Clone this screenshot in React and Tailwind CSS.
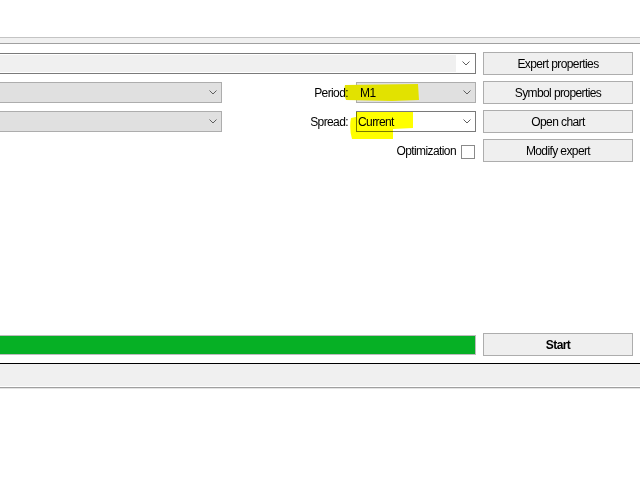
import React from 'react';

function Chevron() {
  return (
    <svg width="8" height="5" viewBox="0 0 8 5" className="shrink-0">
      <polyline points="0.5,0.5 4,4 7.5,0.5" fill="none" stroke="#5f5f5f" strokeWidth="1" />
    </svg>
  );
}

function Button({ children, bold }) {
  return (
    <div className={`h-[23px] w-full flex items-center justify-center border border-[#adadad] bg-[#efefef] ${bold ? 'font-bold' : ''}`}>
      {children}
    </div>
  );
}

function Label({ children }) {
  return <span className="relative z-20 leading-none">{children}</span>;
}

export default function App() {
  return (
    <div className="relative w-[640px] h-[480px] overflow-hidden bg-white text-black text-[12px] tracking-[-0.6px] font-['Liberation_Sans',Arial,sans-serif]">
      <div className="h-[37px]" />
      <div className="h-[7px] border-t border-[#c4c4c4] border-b border-b-[#a0a0a0] bg-[#f0f0f0]" />

      <div className="flex gap-[7px] pr-[7px] mt-[8px]">
        <div className="w-[476px] flex flex-col gap-[6px]">
          {/* expert */}
          <div className="h-[23px] flex items-center">
            <div className="h-[21px] w-full flex border-y border-r border-[#7a7a7a] bg-white py-px">
              <div className="flex-1 bg-[#f0f0f0]" />
              <div className="w-[19px] flex items-center justify-center">
                <Chevron />
              </div>
            </div>
          </div>
          {/* symbol / period */}
          <div className="h-[23px] flex items-center">
            <div className="h-[21px] w-[222px] flex items-center justify-end pr-[4px] border-y border-r border-[#adadad] bg-[#e0e0e0]">
              <Chevron />
            </div>
            <div className="flex-1 flex justify-end pr-[8px]">
              <Label>Period:</Label>
            </div>
            <div className="h-[21px] w-[120px] flex items-center justify-between pl-[3px] pr-[4px] border border-[#adadad] bg-[#e0e0e0]">
              <span className="relative z-20">M1</span>
              <Chevron />
            </div>
          </div>
          {/* spread */}
          <div className="h-[23px] flex items-center">
            <div className="h-[21px] w-[222px] flex items-center justify-end pr-[4px] border-y border-r border-[#adadad] bg-[#e0e0e0]">
              <Chevron />
            </div>
            <div className="flex-1 flex justify-end pr-[8px]">
              <Label>Spread:</Label>
            </div>
            <div className="h-[21px] w-[120px] flex items-center justify-between pl-px pr-[4px] border border-[#7a7a7a] bg-white">
              <span>Current</span>
              <Chevron />
            </div>
          </div>
          {/* optimization */}
          <div className="h-[23px] flex items-center justify-end gap-[5px] pr-px">
            <Label>Optimization</Label>
            <div className="w-[14px] h-[14px] mt-[2px] border border-[#8a8a8a] bg-white" />
          </div>
        </div>

        <div className="w-[150px] flex flex-col gap-[6px]">
          <Button>Expert properties</Button>
          <Button>Symbol properties</Button>
          <Button>Open chart</Button>
          <Button>Modify expert</Button>
        </div>
      </div>

      <div className="flex items-center gap-[7px] pr-[7px] mt-[171px] h-[23px]">
        <div className="w-[476px] h-[20px] border-y border-r border-[#bcbcbc] bg-[#06b025]" />
        <div className="w-[150px]">
          <Button bold>Start</Button>
        </div>
      </div>

      <div className="mt-[7px] h-px bg-black" />
      <div className="h-[22px] bg-[#f0f0f0]" />
      <div className="h-px bg-white" />
      <div className="h-px bg-[#a0a0a0]" />
      <div className="h-px bg-[#e3e3e3]" />

      {/* marker highlights */}
      <svg className="absolute left-0 top-0 z-10 pointer-events-none" width="640" height="480">
        <path d="M345,85 L418,84 L419,100 L392,101 L346,100 Q343,93 345,85 Z" fill="#e2e200" />
      </svg>
      <svg className="absolute left-0 top-0 z-30 pointer-events-none mix-blend-multiply" width="640" height="480">
        <path d="M356,112 L413,112 L413,128 L393,129 L393,139 L352,139 Q349,128 351,118 L356,117 Z" fill="#ffff00" />
      </svg>
    </div>
  );
}
